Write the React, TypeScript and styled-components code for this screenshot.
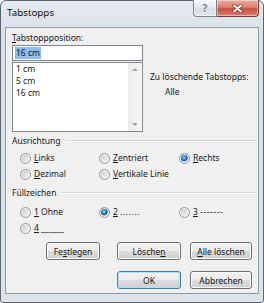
import styled, { createGlobalStyle } from 'styled-components';

const GlobalStyle = createGlobalStyle`
  html, body {
    margin: 0;
    padding: 0;
    background: #ffffff;
  }
  body {
    font-family: "Noto Sans", "Open Sans", sans-serif;
    font-size: 8.5px;
    color: #161616;
  }
`;

const Window = styled.div`
  box-sizing: border-box;
  width: 264px;
  height: 303px;
  border: 1px solid #5d6672;
  border-radius: 6px 6px 3px 3px;
  background: linear-gradient(#e6ebf0, #d9e0e7 30px, #dde3e9);
  display: flex;
  flex-direction: column;
  padding: 0 4px 8px 4px;
`;

const TitleBar = styled.div`
  height: 26px;
  display: flex;
  align-items: flex-start;
`;

const Title = styled.div`
  margin-top: 6px;
  padding-left: 2px;
  font-size: 9.8px;
  line-height: 12px;
  color: #101010;
`;

const Captions = styled.div`
  margin-left: auto;
  margin-top: -1px;
  display: flex;
`;

const CaptionButton = styled.div<{ $close?: boolean }>`
  box-sizing: border-box;
  width: ${p => (p.$close ? 42 : 24)}px;
  height: 17px;
  display: flex;
  align-items: center;
  justify-content: center;
  border: 1px solid ${p => (p.$close ? '#7a3a33' : '#7b838d')};
  border-left-width: ${p => (p.$close ? 0 : 1)}px;
  border-top-width: 0;
  border-radius: ${p => (p.$close ? '0 0 4px 0' : '0 0 0 4px')};
  background: ${p =>
    p.$close
      ? 'linear-gradient(#e8ada2, #d98170 45%, #c9503f 55%, #d7806a)'
      : 'linear-gradient(#f7f9fb, #e5eaef 45%, #d6dde4 55%, #e3e8ed)'};
  box-shadow: inset 0 0 0 1px rgba(255, 255, 255, 0.45);
  color: #7c8590;
  font-family: "DejaVu Sans", sans-serif;
  font-size: 10px;
  font-weight: bold;
  text-shadow: 0 1px 0 #ffffff;
`;

const Client = styled.div`
  flex: 1;
  display: flex;
  flex-direction: column;
  border: 1px solid #8e99a5;
  background: #f0f0f0;
  padding: 4px 6px 3px 6px;
`;

const TopSection = styled.div`
  display: flex;
  gap: 7px;
`;

const LeftCol = styled.div`
  width: 131px;
  display: flex;
  flex-direction: column;
`;

const Label = styled.div`
  height: 12px;
  line-height: 12px;
  white-space: nowrap;
`;

const Key = styled.span`
  text-decoration: underline;
  text-underline-offset: 1px;
`;

const Input = styled.div`
  box-sizing: border-box;
  margin-top: 1px;
  height: 16px;
  border: 1px solid #7d828a;
  background: #ffffff;
  padding-left: 2px;
  display: flex;
  align-items: center;
`;

const Selected = styled.span`
  background: #8dbdef;
  color: #0c1a33;
  line-height: 12px;
  padding: 0 1px;
`;

const ListBox = styled.div`
  box-sizing: border-box;
  margin-top: 1px;
  height: 70px;
  border: 1px solid #828790;
  background: #ffffff;
  display: flex;
`;

const Items = styled.div`
  flex: 1;
  padding: 0 3px;
`;

const Item = styled.div`
  line-height: 12px;
`;

const ScrollBar = styled.div`
  width: 14px;
  background: linear-gradient(90deg, #ececec, #f7f7f7);
  display: flex;
  flex-direction: column;
  align-items: center;
  justify-content: space-between;
  padding: 5px 0;
  box-sizing: border-box;
`;

const Arrow = styled.span<{ $down?: boolean }>`
  width: 0;
  height: 0;
  border-left: 3px solid transparent;
  border-right: 3px solid transparent;
  ${p => (p.$down ? 'border-top: 3px solid #a3a3a3;' : 'border-bottom: 3px solid #a3a3a3;')}
`;

const RightCol = styled.div`
  padding-top: 39px;
  display: flex;
  flex-direction: column;
  gap: 3px;
`;

const Indented = styled.div`
  padding-left: 15px;
  line-height: 12px;
`;

const GroupHeader = styled.div<{ $gap: number }>`
  margin-top: ${p => p.$gap}px;
  height: 12px;
  line-height: 12px;
  display: flex;
  align-items: center;
  margin-right: -5px;
`;

const GroupLine = styled.div`
  flex: 1;
  margin-left: 5px;
  border-top: 1px solid #d5dbe1;
  border-bottom: 1px solid #ffffff;
`;

const RadioGrid = styled.div<{ $gap: number }>`
  margin-top: ${p => p.$gap}px;
  padding-left: 8px;
  display: grid;
  grid-template-columns: 79px 80px 1fr;
  grid-auto-rows: 12px;
  row-gap: 4px;
`;

const Radio = styled.label`
  display: flex;
  align-items: center;
  gap: 3px;
  white-space: nowrap;
  line-height: 12px;
`;

const RadioCircle = styled.span<{ $checked?: boolean }>`
  box-sizing: border-box;
  width: 11px;
  height: 11px;
  border-radius: 50%;
  border: 1px solid #979797;
  background: ${p =>
    p.$checked
      ? 'radial-gradient(circle at 45% 40%, #b4e6ff 0, #3c9be3 1.5px, #1a4f8c 3.4px, #c9cdd1 4px, #f4f4f4 5px)'
      : 'linear-gradient(135deg, #c3c3c3, #e6e6e6 60%, #f8f8f8)'};
  box-shadow: inset 0 0 0 1px #f3f3f3;
  flex-shrink: 0;
`;

const Filler = styled.span`
  letter-spacing: 0.6px;
`;

const ButtonRow = styled.div<{ $gap: number }>`
  margin-top: ${p => p.$gap}px;
  display: flex;
  justify-content: flex-end;
  gap: 9px;
`;

const Button = styled.div<{ $w: number; $default?: boolean; $spaced?: boolean }>`
  box-sizing: border-box;
  width: ${p => p.$w}px;
  height: 18px;
  margin-right: ${p => (p.$spaced ? 8 : 0)}px;
  display: flex;
  align-items: center;
  justify-content: center;
  border: 1px solid ${p => (p.$default ? '#3c7fb1' : '#707070')};
  border-radius: 3px;
  background: linear-gradient(#f3f3f3, #ebebeb 50%, #dddddd 50%, #cfcfcf);
  box-shadow: inset 0 0 0 1px ${p => (p.$default ? '#a8e3f9' : '#fcfcfc')};
  white-space: nowrap;
`;

function CloseGlyph() {
  return (
    <svg width="11" height="9" viewBox="0 0 11 9">
      <path d="M2 1.5 L9 7.5 M9 1.5 L2 7.5" stroke="#7a2a22" strokeWidth="3.4" strokeLinecap="round" />
      <path d="M2 1.5 L9 7.5 M9 1.5 L2 7.5" stroke="#ffffff" strokeWidth="2" strokeLinecap="round" />
    </svg>
  );
}

export default function App() {
  return (
    <>
      <GlobalStyle />
      <Window>
        <TitleBar>
          <Title>Tabstopps</Title>
          <Captions>
            <CaptionButton>?</CaptionButton>
            <CaptionButton $close>
              <CloseGlyph />
            </CaptionButton>
          </Captions>
        </TitleBar>
        <Client>
          <TopSection>
            <LeftCol>
              <Label>
                <Key>T</Key>abstoppposition:
              </Label>
              <Input>
                <Selected>16 cm</Selected>
              </Input>
              <ListBox>
                <Items>
                  <Item>1 cm</Item>
                  <Item>5 cm</Item>
                  <Item>16 cm</Item>
                </Items>
                <ScrollBar>
                  <Arrow />
                  <Arrow $down />
                </ScrollBar>
              </ListBox>
            </LeftCol>
            <RightCol>
              <Label>Zu löschende Tabstopps:</Label>
              <Indented>Alle</Indented>
            </RightCol>
          </TopSection>

          <GroupHeader $gap={3}>
            Ausrichtung
            <GroupLine />
          </GroupHeader>
          <RadioGrid $gap={5}>
            <Radio>
              <RadioCircle />
              <span><Key>L</Key>inks</span>
            </Radio>
            <Radio>
              <RadioCircle />
              <span><Key>Z</Key>entriert</span>
            </Radio>
            <Radio>
              <RadioCircle $checked />
              <span><Key>R</Key>echts</span>
            </Radio>
            <Radio>
              <RadioCircle />
              <span><Key>D</Key>ezimal</span>
            </Radio>
            <Radio>
              <RadioCircle />
              <span><Key>V</Key>ertikale Linie</span>
            </Radio>
          </RadioGrid>

          <GroupHeader $gap={7}>
            Füllzeichen
            <GroupLine />
          </GroupHeader>
          <RadioGrid $gap={7}>
            <Radio>
              <RadioCircle />
              <span><Key>1</Key> Ohne</span>
            </Radio>
            <Radio>
              <RadioCircle $checked />
              <span><Key>2</Key> <Filler>.......</Filler></span>
            </Radio>
            <Radio>
              <RadioCircle />
              <span><Key>3</Key> <Filler>-------</Filler></span>
            </Radio>
            <Radio>
              <RadioCircle />
              <span><Key>4</Key> ______</span>
            </Radio>
          </RadioGrid>

          <ButtonRow $gap={8}>
            <Button $w={54} $spaced>Fe<Key>s</Key>tlegen</Button>
            <Button $w={64}>Lösche<Key>n</Key></Button>
            <Button $w={62}><Key>A</Key>lle löschen</Button>
          </ButtonRow>
          <ButtonRow $gap={11}>
            <Button $w={64} $default>OK</Button>
            <Button $w={62}>Abbrechen</Button>
          </ButtonRow>
        </Client>
      </Window>
    </>
  );
}
